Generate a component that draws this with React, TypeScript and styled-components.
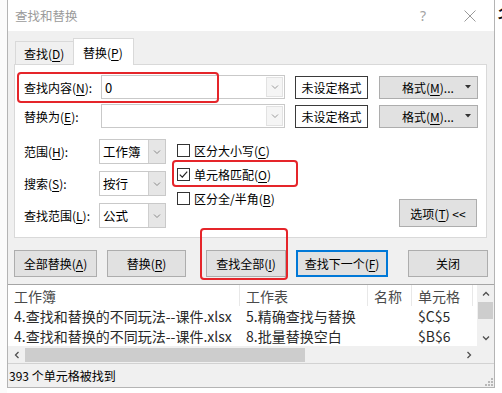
import React from "react";
import styled, { createGlobalStyle } from "styled-components";

const GlobalStyle = createGlobalStyle`
  html, body { margin: 0; padding: 0; background: #ffffff; }
  body {
    font-family: "Noto Sans CJK SC", "Noto Sans", sans-serif;
    font-size: 12px;
    color: #000;
    overflow: hidden;
  }
  *, *::before, *::after { box-sizing: border-box; }
  u { text-underline-offset: 2px; text-decoration-thickness: 1px; }
`;

const Page = styled.div`
  width: 502px;
  height: 393px;
  display: flex;
  background: #fff;
  overflow: hidden;
`;

const LeftMargin = styled.div`
  width: 7px;
  flex: none;
  background: #fbfbfb;
`;

const Sheet = styled.div`
  flex: 1;
  overflow: hidden;
  font-size: 24px;
  line-height: 28px;
  color: #111;
  padding-left: 2px;
  white-space: nowrap;
`;

const Dialog = styled.div`
  position: relative;
  flex: none;
  width: 488px;
  height: 388px;
  background: #f0f0f0;
  border: 1px solid #b4b4b4;
  border-top: none;
  display: flex;
  flex-direction: column;
`;

const TitleBar = styled.div`
  height: 31px;
  flex: none;
  background: #fff;
  display: flex;
  align-items: center;
  padding-left: 7px;
`;

const Title = styled.span`
  color: #9b9b9b;
  font-size: 12.5px;
`;

const TitleButtons = styled.div`
  margin-left: auto;
  margin-right: 1px;
  display: flex;
  gap: 9px;
`;

const TitleButton = styled.div<{ $w: number }>`
  width: ${(p) => p.$w}px;
  height: 31px;
  display: flex;
  align-items: center;
  justify-content: center;
  color: #a3a3a3;
  font-family: "Noto Sans", sans-serif;
  font-size: 14px;
`;

const Upper = styled.div`
  flex: none;
  padding: 7px 7px 0 6px;
`;

const TabsRow = styled.div`
  display: flex;
  align-items: flex-end;
  height: 26px;
  padding-left: 1px;
  position: relative;
  z-index: 1;
`;

const Tab = styled.div<{ $active?: boolean }>`
  height: ${(p) => (p.$active ? 27 : 23)}px;
  margin-bottom: ${(p) => (p.$active ? -1 : 0)}px;
  margin-left: ${(p) => (p.$active ? -1 : 0)}px;
  width: ${(p) => (p.$active ? 61 : 59)}px;
  padding-left: ${(p) => (p.$active ? 9 : 8)}px;
  display: flex;
  align-items: center;
  border: 1px solid #d9d9d9;
  border-bottom: none;
  background: ${(p) => (p.$active ? "#fff" : "#f0f0f0")};
  white-space: nowrap;
`;

const Panel = styled.div`
  height: 174px;
  background: #fff;
  border: 1px solid #d9d9d9;
  padding: 10px 9px 0 9px;
  display: flex;
  flex-direction: column;
`;

const FieldRow = styled.div`
  display: flex;
  align-items: center;
  height: 24px;
  & + & {
    margin-top: 5px;
  }
`;

const FieldLabel = styled.div<{ $w: number }>`
  width: ${(p) => p.$w}px;
  flex: none;
  white-space: nowrap;
`;

const Combo = styled.div`
  width: 184px;
  height: 24px;
  flex: none;
  display: flex;
  border: 1px solid #c9c9c9;
  background: #fff;
`;

const ComboText = styled.div`
  flex: 1;
  padding-left: 3px;
  font-size: 13px;
  display: flex;
  align-items: center;
`;

const ComboDrop = styled.div`
  width: 17px;
  margin: 1px;
  display: flex;
  align-items: center;
  justify-content: center;
  background: #f5f5f5;
  border: 1px solid #e2e2e2;
`;

const FormatBox = styled.div`
  margin-left: 10px;
  width: 73px;
  height: 23px;
  flex: none;
  border: 1px solid #3a3a3a;
  background: #fff;
  display: flex;
  align-items: center;
  justify-content: center;
`;

const FormatButton = styled.div`
  margin-left: 11px;
  width: 99px;
  height: 23px;
  flex: none;
  background: #e1e1e1;
  border: 1px solid #adadad;
  display: flex;
  align-items: center;
  padding: 0 6px 0 22px;
`;

const DropTriangle = styled.span`
  margin-left: auto;
  display: flex;
`;

const OptionsArea = styled.div`
  display: flex;
  margin-top: 11px;
  flex: 1;
  padding-bottom: 9px;
`;

const SelectGrid = styled.div`
  display: grid;
  grid-template-columns: 75px 67px;
  grid-auto-rows: 25px;
  row-gap: 7px;
  align-items: center;
`;

const Select = styled.div`
  height: 25px;
  display: flex;
  border: 1px solid #c9c9c9;
  background: #fff;
`;

const SelectText = styled.div`
  flex: 1;
  padding-left: 3px;
  display: flex;
  align-items: center;
  font-size: 12.5px;
`;

const SelectDrop = styled.div`
  width: 17px;
  background: #e6e6e6;
  border-left: 1px solid #cfcfcf;
  display: flex;
  align-items: center;
  justify-content: center;
`;

const CheckColumn = styled.div`
  margin-left: 11px;
  padding-top: 1px;
  display: flex;
  flex-direction: column;
  gap: 4px;
`;

const CheckRow = styled.div`
  height: 20px;
  display: flex;
  align-items: center;
  gap: 4px;
  white-space: nowrap;
`;

const CheckBox = styled.div`
  width: 13px;
  height: 13px;
  border: 1px solid #333;
  background: #fff;
  display: flex;
  align-items: center;
  justify-content: center;
`;

const OptionsButton = styled.div`
  margin-left: auto;
  align-self: flex-end;
  margin-bottom: 1px;
  width: 78px;
  height: 28px;
  background: #e1e1e1;
  border: 1px solid #adadad;
  display: flex;
  align-items: center;
  justify-content: center;
  white-space: nowrap;
`;

const ButtonRow = styled.div`
  margin-top: 12px;
  height: 27px;
  display: flex;
`;

const Button = styled.div<{ $w: number; $ml: number; $primary?: boolean }>`
  width: ${(p) => p.$w}px;
  margin-left: ${(p) => p.$ml}px;
  height: 27px;
  flex: none;
  background: #e1e1e1;
  border: 1px solid ${(p) => (p.$primary ? "#0078d7" : "#adadad")};
  box-shadow: ${(p) => (p.$primary ? "inset 0 0 0 1px #0078d7" : "none")};
  display: flex;
  align-items: center;
  justify-content: center;
  white-space: nowrap;
`;

const Results = styled.div`
  margin-top: 7px;
  height: 80px;
  flex: none;
  border-top: 1px solid #a5a5a5;
  border-bottom: 1px solid #d2d2d2;
  background: #fff;
  display: grid;
  grid-template-columns: 469px 17px;
  grid-template-rows: 61px 17px;
`;

const ListMain = styled.div`
  overflow: hidden;
  display: grid;
  grid-template-columns: 232px 128px 44px 61px;
  grid-template-rows: 21px 20px 20px;
  font-size: 14px;
  line-height: 18px;
  color: #2a2a2a;
`;

const HeadCell = styled.div`
  border-right: 1px solid #e8e8e8;
  padding-left: 6px;
  display: flex;
  align-items: center;
  color: #4a4a4a;
  white-space: nowrap;
`;

const Cell = styled.div`
  padding-left: 6px;
  display: flex;
  align-items: center;
  white-space: nowrap;
  overflow: hidden;
`;

const VScroll = styled.div`
  background: #f0f0f0;
  display: flex;
  flex-direction: column;
`;

const HScroll = styled.div`
  background: #f0f0f0;
  display: flex;
  align-items: center;
`;

const ScrollArrow = styled.div`
  width: 17px;
  height: 17px;
  flex: none;
  display: flex;
  align-items: center;
  justify-content: center;
`;

const VThumb = styled.div`
  height: 17px;
  margin: 0 1px;
  background: #cdcdcd;
`;

const HThumb = styled.div`
  width: 280px;
  height: 14px;
  background: #cdcdcd;
`;

const Spacer = styled.div`
  flex: 1;
`;

const Corner = styled.div`
  background: #f0f0f0;
`;

const StatusBar = styled.div`
  flex: 1;
  display: flex;
  align-items: center;
  padding-left: 1px;
`;

const StatusText = styled.span`
  font-size: 12px;
`;

const Grip = styled.div`
  align-self: flex-end;
  margin: 0 1px 1px auto;
  display: flex;
`;

const Highlight = styled.div<{ $x: number; $y: number; $w: number; $h: number }>`
  position: absolute;
  left: ${(p) => p.$x}px;
  top: ${(p) => p.$y}px;
  width: ${(p) => p.$w}px;
  height: ${(p) => p.$h}px;
  border: 2px solid #e5252a;
  border-radius: 4px;
  pointer-events: none;
  z-index: 5;
`;

type Dir = "down" | "up" | "left" | "right";
const CHEV: Record<Dir, string> = {
  down: "M1 2.5 L4 5.5 L7 2.5",
  up: "M1 5.5 L4 2.5 L7 5.5",
  left: "M5.5 1 L2.5 4 L5.5 7",
  right: "M2.5 1 L5.5 4 L2.5 7",
};

const Chevron = ({ dir, color, width = 1 }: { dir: Dir; color: string; width?: number }) => (
  <svg width="8" height="8" viewBox="0 0 8 8">
    <path d={CHEV[dir]} fill="none" stroke={color} strokeWidth={width} />
  </svg>
);

const Check = () => (
  <svg width="11" height="11" viewBox="0 0 11 11">
    <path d="M1.8 5.6 L4.3 8.1 L9.2 2.6" fill="none" stroke="#222" strokeWidth="1.2" />
  </svg>
);

const CloseIcon = () => (
  <svg width="12" height="12" viewBox="0 0 12 12">
    <path d="M0.5 0.5 L11.5 11.5 M11.5 0.5 L0.5 11.5" stroke="#9a9a9a" strokeWidth="1" />
  </svg>
);

const Triangle = () => (
  <svg width="6" height="4" viewBox="0 0 6 4">
    <polygon points="0,0 6,0 3,3.5" fill="#333" />
  </svg>
);

const GripIcon = () => (
  <svg width="8" height="8" viewBox="0 0 8 8">
    {[
      [6, 0],
      [6, 3],
      [3, 3],
      [6, 6],
      [3, 6],
      [0, 6],
    ].map(([x, y], i) => (
      <rect key={i} x={x} y={y} width="2" height="2" fill="#b8b8b8" />
    ))}
  </svg>
);

const rows = [
  { book: "4.查找和替换的不同玩法--课件.xlsx", sheet: "5.精确查找与替换", name: "", cell: "$C$5" },
  { book: "4.查找和替换的不同玩法--课件.xlsx", sheet: "8.批量替换空白", name: "", cell: "$B$6" },
];

export default function App() {
  return (
    <>
      <GlobalStyle />
      <Page>
        <LeftMargin />
        <Dialog>
          <TitleBar>
            <Title>查找和替换</Title>
            <TitleButtons>
              <TitleButton $w={30}>?</TitleButton>
              <TitleButton $w={46}>
                <CloseIcon />
              </TitleButton>
            </TitleButtons>
          </TitleBar>

          <Upper>
            <TabsRow>
              <Tab>
                查找(<u>D</u>)
              </Tab>
              <Tab $active>
                替换(<u>P</u>)
              </Tab>
            </TabsRow>
            <Panel>
              <FieldRow>
                <FieldLabel $w={77}>
                  查找内容(<u>N</u>):
                </FieldLabel>
                <Combo>
                  <ComboText>0</ComboText>
                  <ComboDrop>
                    <Chevron dir="down" color="#9a9a9a" />
                  </ComboDrop>
                </Combo>
                <FormatBox>未设定格式</FormatBox>
                <FormatButton>
                  格式(<u>M</u>)...
                  <DropTriangle>
                    <Triangle />
                  </DropTriangle>
                </FormatButton>
              </FieldRow>
              <FieldRow>
                <FieldLabel $w={77}>
                  替换为(<u>E</u>):
                </FieldLabel>
                <Combo>
                  <ComboText />
                  <ComboDrop>
                    <Chevron dir="down" color="#9a9a9a" />
                  </ComboDrop>
                </Combo>
                <FormatBox>未设定格式</FormatBox>
                <FormatButton>
                  格式(<u>M</u>)...
                  <DropTriangle>
                    <Triangle />
                  </DropTriangle>
                </FormatButton>
              </FieldRow>

              <OptionsArea>
                <SelectGrid>
                  <FieldLabel $w={75}>
                    范围(<u>H</u>):
                  </FieldLabel>
                  <Select>
                    <SelectText>工作簿</SelectText>
                    <SelectDrop>
                      <Chevron dir="down" color="#8a8a8a" />
                    </SelectDrop>
                  </Select>
                  <FieldLabel $w={75}>
                    搜索(<u>S</u>):
                  </FieldLabel>
                  <Select>
                    <SelectText>按行</SelectText>
                    <SelectDrop>
                      <Chevron dir="down" color="#8a8a8a" />
                    </SelectDrop>
                  </Select>
                  <FieldLabel $w={75}>
                    查找范围(<u>L</u>):
                  </FieldLabel>
                  <Select>
                    <SelectText>公式</SelectText>
                    <SelectDrop>
                      <Chevron dir="down" color="#8a8a8a" />
                    </SelectDrop>
                  </Select>
                </SelectGrid>
                <CheckColumn>
                  <CheckRow>
                    <CheckBox />
                    <span>
                      区分大小写(<u>C</u>)
                    </span>
                  </CheckRow>
                  <CheckRow>
                    <CheckBox>
                      <Check />
                    </CheckBox>
                    <span>
                      单元格匹配(<u>O</u>)
                    </span>
                  </CheckRow>
                  <CheckRow>
                    <CheckBox />
                    <span>
                      区分全/半角(<u>B</u>)
                    </span>
                  </CheckRow>
                </CheckColumn>
                <OptionsButton>
                  选项(<u>T</u>)&nbsp;&lt;&lt;
                </OptionsButton>
              </OptionsArea>
            </Panel>

            <ButtonRow>
              <Button $w={83} $ml={0}>
                全部替换(<u>A</u>)
              </Button>
              <Button $w={79} $ml={10}>
                替换(<u>R</u>)
              </Button>
              <Button $w={80} $ml={20}>
                查找全部(<u>I</u>)
              </Button>
              <Button $w={92} $ml={10} $primary>
                查找下一个(<u>F</u>)
              </Button>
              <Button $w={80} $ml={20}>
                关闭
              </Button>
            </ButtonRow>
          </Upper>

          <Results>
            <ListMain>
              <HeadCell>工作簿</HeadCell>
              <HeadCell>工作表</HeadCell>
              <HeadCell>名称</HeadCell>
              <HeadCell>单元格</HeadCell>
              {rows.map((r, i) => (
                <React.Fragment key={i}>
                  <Cell>{r.book}</Cell>
                  <Cell>{r.sheet}</Cell>
                  <Cell>{r.name}</Cell>
                  <Cell>{r.cell}</Cell>
                </React.Fragment>
              ))}
            </ListMain>
            <VScroll>
              <ScrollArrow>
                <Chevron dir="up" color="#505050" width={1.3} />
              </ScrollArrow>
              <VThumb />
              <Spacer />
              <ScrollArrow>
                <Chevron dir="down" color="#505050" width={1.3} />
              </ScrollArrow>
            </VScroll>
            <HScroll>
              <ScrollArrow>
                <Chevron dir="left" color="#505050" width={1.3} />
              </ScrollArrow>
              <HThumb />
              <Spacer />
              <ScrollArrow>
                <Chevron dir="right" color="#505050" width={1.3} />
              </ScrollArrow>
            </HScroll>
            <Corner />
          </Results>

          <StatusBar>
            <StatusText>393 个单元格被找到</StatusText>
            <Grip>
              <GripIcon />
            </Grip>
          </StatusBar>

          <Highlight $x={9} $y={72} $w={202} $h={31} />
          <Highlight $x={164} $y={160} $w={126} $h={27} />
          <Highlight $x={192} $y={228} $w={88} $h={52} />
        </Dialog>
        <Sheet>名</Sheet>
      </Page>
    </>
  );
}
